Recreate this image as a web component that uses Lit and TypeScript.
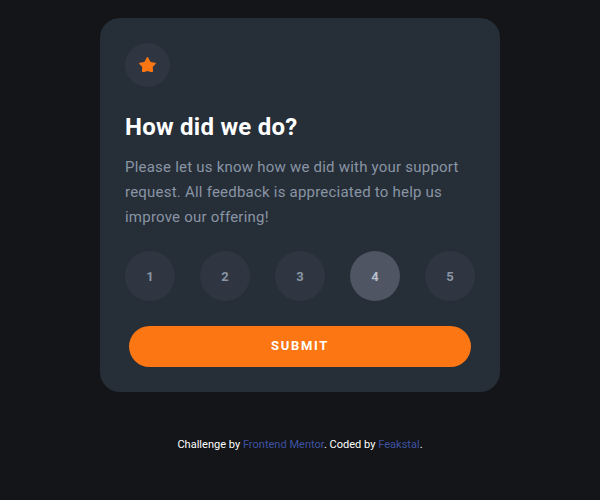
import { LitElement, html, css } from "lit";
import { customElement, state } from "lit/decorators.js";
import { classMap } from "lit/directives/class-map.js";

@customElement("app-root")
export class AppRoot extends LitElement {
  static styles = css`
    :host {
      display: flex;
      flex-direction: column;
      align-items: center;
      box-sizing: border-box;
      height: 500px;
      padding-top: 18px;
      overflow: hidden;
      background: #131518;
      font-family: Roboto, "Liberation Sans", sans-serif;
    }
    .card {
      box-sizing: border-box;
      width: 400px;
      height: 374px;
      padding: 25px;
      border-radius: 20px;
      background: #262e38;
    }
    .badge {
      display: flex;
      align-items: center;
      justify-content: center;
      box-sizing: border-box;
      width: 45px;
      height: 44px;
      padding-bottom: 1px;
      border-radius: 50%;
      background: #2f3641;
    }
    .badge svg {
      display: block;
    }
    h1 {
      margin: 22px 0 0;
      font-size: 24px;
      line-height: 36px;
      font-weight: 700;
      letter-spacing: 0.25px;
      color: #fff;
      white-space: nowrap;
    }
    p {
      margin: 10px 0 0;
      font-size: 15px;
      line-height: 25px;
      letter-spacing: 0.22px;
      color: #8995a4;
      white-space: nowrap;
    }
    p span {
      display: block;
    }
    .ratings {
      display: flex;
      justify-content: space-between;
      margin-top: 21px;
    }
    button {
      border: 0;
      padding: 0;
      font-family: inherit;
      font-weight: 700;
      cursor: pointer;
    }
    .rate {
      width: 50px;
      height: 50px;
      border-radius: 50%;
      background: #2f3641;
      color: #8995a4;
      font-size: 13px;
    }
    .rate.on {
      background: #4f5563;
      color: #b9c1cd;
    }
    .submit {
      display: block;
      width: 342px;
      height: 41px;
      margin: 25px auto 0;
      padding-bottom: 2px;
      border-radius: 20.5px;
      background: #fc7614;
      color: #fff;
      font-size: 13px;
      letter-spacing: 1.7px;
    }
    footer {
      margin-top: 45px;
      font-size: 11px;
      line-height: 16px;
      letter-spacing: 0.02px;
      color: #fff;
      white-space: nowrap;
    }
    a {
      color: #3e52a3;
      text-decoration: none;
    }
  `;

  @state() private rating = 4;

  render() {
    return html`
      <main class="card">
        <div class="badge">
          <svg width="17" height="15" viewBox="0 0 17 15">
            <path fill="#fc7614" d="M7.8.5Q8.5-.4 9.2.5L11.6 4.9 16.2 5.7Q17.3 6.2 16.6 7L13.7 9.9 14.1 14.2Q14 15.1 13 15H11.6L8.5 13.9 5.4 15H4Q3 15.1 2.9 14.2L3.3 9.9.4 7Q-.3 6.2.8 5.7L5.4 4.9Z" />
          </svg>
        </div>
        <h1>How did we do?</h1>
        <p>
          <span>Please let us know how we did with your support</span>
          <span>request. All feedback is appreciated to help us</span>
          <span>improve our offering!</span>
        </p>
        <div class="ratings">
          ${[1, 2, 3, 4, 5].map(
            (n) => html`<button
              class=${classMap({ rate: true, on: n === this.rating })}
              @click=${() => (this.rating = n)}
            >${n}</button>`
          )}
        </div>
        <button class="submit">SUBMIT</button>
      </main>
      <footer>Challenge by <a>Frontend Mentor</a>. Coded by <a>Feakstal</a>.</footer>
    `;
  }
}
